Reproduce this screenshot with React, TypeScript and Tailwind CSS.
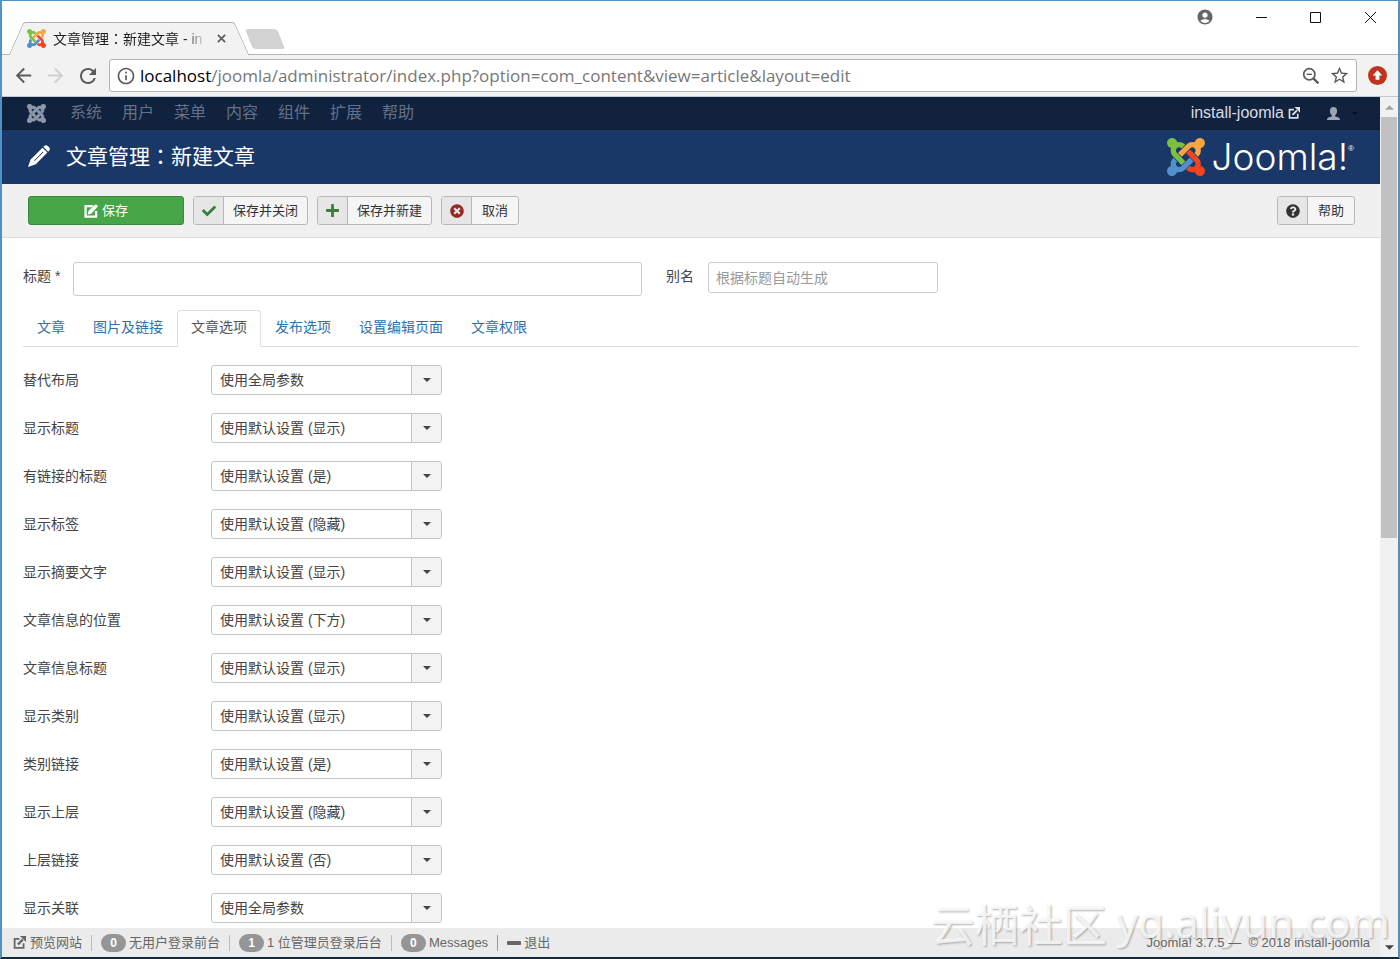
import React, { useState } from "react";
import {
  MdAccountCircle,
  MdArrowBack,
  MdArrowForward,
  MdInfoOutline,
  MdRefresh,
  MdStarBorder,
} from "react-icons/md";
import { FaCheck, FaPlus, FaQuestionCircle, FaTimesCircle } from "react-icons/fa";

const navItems = ["系统", "用户", "菜单", "内容", "组件", "扩展", "帮助"];

const tabs = ["文章", "图片及链接", "文章选项", "发布选项", "设置编辑页面", "文章权限"];

const fields = [
  { id: "layout", label: "替代布局", value: "使用全局参数" },
  { id: "show_title", label: "显示标题", value: "使用默认设置 (显示)" },
  { id: "link_titles", label: "有链接的标题", value: "使用默认设置 (是)" },
  { id: "show_tags", label: "显示标签", value: "使用默认设置 (隐藏)" },
  { id: "show_intro", label: "显示摘要文字", value: "使用默认设置 (显示)" },
  { id: "info_position", label: "文章信息的位置", value: "使用默认设置 (下方)" },
  { id: "info_title", label: "文章信息标题", value: "使用默认设置 (显示)" },
  { id: "show_category", label: "显示类别", value: "使用默认设置 (显示)" },
  { id: "link_category", label: "类别链接", value: "使用默认设置 (是)" },
  { id: "show_parent", label: "显示上层", value: "使用默认设置 (隐藏)" },
  { id: "link_parent", label: "上层链接", value: "使用默认设置 (否)" },
  { id: "show_assoc", label: "显示关联", value: "使用全局参数" },
];

const JoomlaMark = ({ mono = false, className = "" }: { mono?: boolean; className?: string }) => (
  <svg
    viewBox="0 32 448 448"
    className={className}
    stroke={mono ? "currentColor" : "none"}
    strokeWidth="14"
    aria-hidden="true"
  >
    <path
      fill={mono ? "currentColor" : "#7ac143"}
      d="M.6 92.1C.6 58.8 27.4 32 60.4 32c30 0 54.5 21.9 59.2 50.2 32.6-7.6 67.1.6 96.5 30l-44.3 44.3c-20.5-20.5-42.6-16.3-55.4-3.5-14.3 14.3-14.3 37.9 0 52.2l99.5 99.5-44 44.3c-87.7-87.2-49.7-49.7-99.8-99.7-26.8-26.5-35-64.8-24.8-98.9C20.4 144.6.6 120.7.6 92.1z"
    />
    <path
      fill={mono ? "currentColor" : "#f9a541"}
      d="M130.1 208.5l44.3 44.3c10-10 89.7-89.7 99.7-99.8 14.3-14.3 37.6-14.3 51.9 0 12.8 12.8 17 35-3.5 55.4l44 44.3c31.2-31.2 38.5-67.6 28.9-101.2 29.2-4.1 51.9-29.2 51.9-59.5 0-33.2-26.8-60.1-59.8-60.1-30.3 0-55.4 22.5-59.5 51.6-33.8-9.9-71.7-1.5-98.3 25.1-18.3 19.1-71.1 71.5-99.6 99.9z"
    />
    <path
      fill={mono ? "currentColor" : "#f44321"}
      d="M396.4 360.7c8.2-32.7-.9-68.5-26.3-93.9-11.8-12.2 5 4.7-99.5-99.7l-44.3 44.3 99.7 99.7c14.3 14.3 14.3 37.6 0 51.9-12.8 12.8-35 17-55.4-3.5l-44 44.3c27.6 30.2 68 38.8 102.7 28 5.5 27.4 29.7 48.1 58.9 48.1 33 0 59.8-26.8 59.8-60.1 0-30.2-22.5-55-51.6-59.1z"
    />
    <path
      fill={mono ? "currentColor" : "#5091cd"}
      d="M312.1 307.6l-44-44.3c-87 86.4-50.4 50.4-99.7 99.8-14.3 14.3-37.6 14.3-51.9 0-13.1-13.4-16.9-35.3 3.2-55.4l-44-44.3c-30.2 30.2-38 65.2-29.5 98.3-26.7 6-46.2 29.9-46.2 58.2C0 453.2 26.8 480 59.8 480c28.6 0 52.5-19.8 58.6-46.7 32.7 8.2 68.5-.6 94.2-26 32.1-32 12.2-12.4 99.5-99.7z"
    />
  </svg>
);

const ExternalIcon = ({ className = "" }: { className?: string }) => (
  <svg viewBox="0 0 16 16" className={className} fill="none" stroke="currentColor" strokeWidth="2.2" aria-hidden="true">
    <path d="M8 3.5H2v11h11V9" />
    <path d="M6 10.500l6-6" strokeWidth="2.8" />
    <path d="M8.500 0H16v7.500z" fill="currentColor" stroke="none" />
  </svg>
);

const PencilIcon = ({ className = "" }: { className?: string }) => (
  <svg viewBox="0 0 22 22" className={className} aria-hidden="true">
    <path
      fill="currentColor"
      d="M15.400 1.800L16.500.8q1.700-1.300 3.300.2l1.300 1.300q1.400 1.600.2 3.200l-1.100 1.200zM14.500 2.700l4.900 4.800L7.800 19.300 0 22l2.600-7.400z"
    />
    <path d="M6.500 15.700L15 7" stroke="#1a3867" strokeWidth="1" fill="none" />
  </svg>
);

const EditIcon = ({ className = "" }: { className?: string }) => (
  <svg viewBox="0 0 16 16" className={className} aria-hidden="true">
    <path d="M10 2.500H1.800v12h12V8" fill="none" stroke="currentColor" strokeWidth="2.600" />
    <path d="M4.300 12l.8-4L12.300.9q1-.9 2 0l.9.900q.9 1 0 2L8.200 11z" fill="currentColor" />
  </svg>
);

const ZoomOutIcon = ({ className = "" }: { className?: string }) => (
  <svg viewBox="0 0 18 18" className={className} fill="none" stroke="currentColor" strokeWidth="1.700" aria-hidden="true">
    <circle cx="7.300" cy="7.300" r="5.600" />
    <path d="M4.700 7.300h5.200" strokeWidth="1.400" />
    <path d="M11.400 11.400l5 5" strokeWidth="2.200" />
  </svg>
);

const UserIcon = ({ className = "" }: { className?: string }) => (
  <svg viewBox="0 0 16 16" className={className} fill="currentColor" aria-hidden="true">
    <path d="M8 1c2.500 0 3.800 1.700 3.800 4.300 0 1.900-.8 3.600-2 4.500v1.300c2.800.4 5.200 1.300 5.200 3.900H1c0-2.600 2.400-3.500 5.200-3.900V9.800c-1.200-.9-2-2.600-2-4.500C4.200 2.700 5.500 1 8 1z" />
  </svg>
);

const Caret = ({ className = "" }: { className?: string }) => (
  <svg viewBox="0 0 8 4" className={className} fill="currentColor" aria-hidden="true">
    <path d="M0 0h8L4 4z" />
  </svg>
);

// Full-width colon, centred in its cell
const Colon = () => <span className="font-['Noto_Sans_CJK_TC',sans-serif]">：</span>;

interface ToolButtonProps {
  icon: React.ReactNode;
  children: React.ReactNode;
}

const ToolButton: React.FC<ToolButtonProps> = ({ icon, children }) => (
  <button className="flex h-[29px] min-w-[78px] overflow-hidden rounded-[3px] border border-[#b8b8b8] bg-[#f5f5f5] text-[13px] leading-[27px] text-[#333]">
    <span className="flex h-full w-[30px] flex-none items-center justify-center border-r border-[#b8b8b8] bg-[#e6e6e6]">
      {icon}
    </span>
    <span className="flex-1 px-[9px]">{children}</span>
  </button>
);

const BrowserChrome = () => (
  <header className="flex-none bg-white">
    <div className="flex h-[54px] items-end justify-between border-b border-[#b5b5b5]">
      <div className="flex items-end pl-[7px]">
        <div className="relative -mb-px flex h-[33px] w-[240px] items-center pl-[18px] pr-[22px]">
          <span className="absolute inset-y-0 left-[7px] w-1/2 -skew-x-[24deg] rounded-tl-[3px] border-l border-t border-[#b0b0b0] bg-[#f2f2f2]" />
          <span className="absolute inset-y-0 right-[7px] w-1/2 skew-x-[24deg] rounded-tr-[3px] border-r border-t border-[#b0b0b0] bg-[#f2f2f2]" />
          <JoomlaMark className="relative size-[19px] flex-none" />
          <span className="relative ml-[7px] w-[154px] overflow-hidden whitespace-nowrap text-sm text-[#222] [mask-image:linear-gradient(to_right,black_85%,transparent)]">
            文章管理<Colon />新建文章 - in
          </span>
          <button aria-label="关闭标签页" className="relative ml-[10px] flex-none text-[#5a5a5a]">
            <svg viewBox="0 0 10 10" className="size-[9px]" stroke="currentColor" strokeWidth="1.800">
              <path d="M1 1l8 8M9 1l-8 8" />
            </svg>
          </button>
        </div>
        <button
          aria-label="新标签页"
          className="mb-[5px] h-[20px] w-[32px] skew-x-[22deg] rounded-[3px] bg-[#d2d2d2]"
        />
      </div>
      <div className="flex self-start pr-[21px] pt-[7px] text-[#111]">
        <button aria-label="用户" className="mr-[41px] text-[#666]">
          <MdAccountCircle className="size-[18px]" />
        </button>
        <button aria-label="最小化" className="mr-[41px]">
          <svg viewBox="0 0 13 13" className="size-[13px]" stroke="currentColor">
            <path d="M1 6.5h11" />
          </svg>
        </button>
        <button aria-label="最大化" className="mr-[42px]">
          <svg viewBox="0 0 13 13" className="size-[13px]" stroke="currentColor" fill="none">
            <path d="M1.500 1.500h10v10h-10z" />
          </svg>
        </button>
        <button aria-label="关闭">
          <svg viewBox="0 0 13 13" className="size-[13px]" stroke="currentColor">
            <path d="M1 1l11 11M12 1L1 12" />
          </svg>
        </button>
      </div>
    </div>
    <div className="flex h-[42px] items-center border-b border-[#c4c7cf] bg-[#f2f2f2] pl-[10px] pr-[11px] text-[#5a5a5a]">
      <button aria-label="后退">
        <MdArrowBack className="size-[23px]" />
      </button>
      <button aria-label="前进" className="ml-[9px] text-[#d0d0d0]">
        <MdArrowForward className="size-[23px]" />
      </button>
      <button aria-label="刷新" className="ml-[9px] mr-[9px]">
        <MdRefresh className="size-[24px]" />
      </button>
      <div className="flex h-[33px] flex-1 items-center rounded-[3px] border border-[#b3b3b3] bg-white px-[6px]">
        <MdInfoOutline className="size-[20px] flex-none" />
        <span className="ml-1 flex-1 whitespace-nowrap font-['Open_Sans',sans-serif] text-[17px] leading-[24px] text-[#777]">
          <span className="text-black">localhost</span>
          /joomla/administrator/index.php?option=com_content&amp;view=article&amp;layout=edit
        </span>
        <ZoomOutIcon className="size-[18px] flex-none" />
        <MdStarBorder className="ml-[9px] size-[21px] flex-none" />
      </div>
      <button aria-label="更新" className="ml-[11px]">
        <svg viewBox="0 0 20 20" className="size-[19px]">
          <circle cx="10" cy="10" r="10" fill="#c0341f" />
          <path d="M10 4.500l5 5.500h-3v4.500H8V10H5z" fill="#fff" />
        </svg>
      </button>
    </div>
  </header>
);

const Badge = ({ children }: { children: React.ReactNode }) => (
  <span className="flex h-[18px] w-[25px] items-center justify-center rounded-full bg-[#959595] text-xs font-bold text-white">
    {children}
  </span>
);

const StatusBar = () => (
  <footer className="flex h-[29px] flex-none items-center justify-between bg-[#ebebeb] pl-[11px] pr-[10px] text-[13px] text-[#666]">
    <div className="flex items-center">
      <a href="#preview" className="flex items-center gap-1">
        <ExternalIcon className="size-[13px]" />
        预览网站
      </a>
      <span className="ml-[9px] h-4 border-l border-[#bbb]" />
      <a href="#visitors" className="ml-[9px] flex items-center gap-[3px]">
        <Badge>0</Badge>无用户登录前台
      </a>
      <span className="ml-[9px] h-4 border-l border-[#bbb]" />
      <a href="#admins" className="ml-[9px] flex items-center gap-[3px]">
        <Badge>1</Badge>1 位管理员登录后台
      </a>
      <span className="ml-[9px] h-4 border-l border-[#bbb]" />
      <a href="#messages" className="ml-[9px] flex items-center gap-[3px]">
        <Badge>0</Badge>Messages
      </a>
      <span className="ml-[9px] h-4 border-l border-[#999]" />
      <a href="#logout" className="ml-[9px] flex items-center gap-[3px]">
        <span className="h-[4px] w-[14px] rounded-[1px] bg-[#666]" />
        退出
      </a>
    </div>
    <span className="relative z-10">Joomla! 3.7.5 — &nbsp;© 2018 install-joomla</span>
  </footer>
);

const App: React.FC = () => {
  const [activeTab, setActiveTab] = useState("文章选项");

  return (
    <div className="relative flex h-screen flex-col overflow-hidden border-x-2 border-b-2 border-t border-[#4f93c4] border-b-[#14293a] bg-white font-['Liberation_Sans','Noto_Sans_CJK_SC',sans-serif]">
      <BrowserChrome />

      <div className="flex min-h-0 flex-1">
        <div className="flex min-w-0 flex-1 flex-col">
          <div className="min-h-0 flex-1 overflow-hidden">
            <nav className="flex h-[33px] items-center border-b border-[#0d1a30] bg-[#10223e] pl-[25px] pr-[22px] text-base text-[#63718a]">
              <a href="#home" aria-label="Joomla">
                <JoomlaMark mono className="size-[19px] text-[#8d98ab]" />
              </a>
              <ul className="ml-[24px] flex gap-5">
                {navItems.map((item) => (
                  <li key={item}>
                    <a href={`#${item}`}>{item}</a>
                  </li>
                ))}
              </ul>
              <a href="#site" className="ml-auto flex items-center gap-1 text-[#d9dde4]">
                install-joomla <ExternalIcon className="size-[12px]" />
              </a>
              <button aria-label="用户菜单" className="ml-[26px] flex items-center gap-[11px] text-[#9aa5b8]">
                <UserIcon className="size-[15px]" />
                <Caret className="h-[3px] w-[6px] text-[#070f1e]" />
              </button>
            </nav>

            <div className="flex h-[54px] items-center justify-between bg-[#1a3867] px-[26px] text-white">
              <h1 className="flex items-center pb-[2px] text-[21px] leading-[30px]">
                <PencilIcon className="mr-4 size-[22px]" />
                <span>
                  文章管理<Colon />新建文章
                </span>
              </h1>
              <a href="#joomla" className="flex items-center">
                <JoomlaMark className="size-[38px]" />
                <span className="ml-[7px] font-['Inter',sans-serif] text-[37px] font-light leading-[40px]">
                  Joomla!
                </span>
                <sup className="-top-2 text-[8px]">®</sup>
              </a>
            </div>

            <div className="flex h-[54px] items-center gap-[9px] border-b border-[#dcdcdc] bg-[#f0f0f0] pl-[26px] pr-[25px]">
              <button className="flex h-[29px] w-[156px] items-center justify-center gap-1 rounded-[3px] border border-[#3a8a3a] bg-[#46a546] text-[13px] text-white">
                <EditIcon className="size-[14px]" />
                保存
              </button>
              <ToolButton icon={<FaCheck className="size-[14px] text-[#378137]" />}>保存并关闭</ToolButton>
              <ToolButton icon={<FaPlus className="size-[15px] text-[#378137]" />}>保存并新建</ToolButton>
              <ToolButton icon={<FaTimesCircle className="size-[14px] text-[#942a25]" />}>取消</ToolButton>
              <div className="ml-auto">
                <ToolButton icon={<FaQuestionCircle className="size-[14px] text-[#333]" />}>帮助</ToolButton>
              </div>
            </div>

            <form className="px-[21px] pt-6 text-sm text-[#444]">
              <div className="flex items-start">
                <label htmlFor="title" className="w-[50px] flex-none leading-[28px]">
                  标题 *
                </label>
                <input
                  id="title"
                  className="h-[34px] w-full max-w-[569px] rounded-[3px] border border-[#ccc] bg-white px-2"
                />
                <label htmlFor="alias" className="ml-6 w-[42px] flex-none leading-[28px]">
                  别名
                </label>
                <input
                  id="alias"
                  placeholder="根据标题自动生成"
                  className="h-[31px] w-[230px] rounded-[3px] border border-[#ccc] bg-white px-[7px] placeholder:text-[#999]"
                />
              </div>

              <div role="tablist" className="mt-[14px] flex border-b border-[#ddd]">
                {tabs.map((tab) => (
                  <button
                    key={tab}
                    type="button"
                    role="tab"
                    aria-selected={activeTab === tab}
                    onClick={() => setActiveTab(tab)}
                    className={`-mb-px h-[37px] rounded-t-[4px] border px-[13px] pb-[3px] ${
                      activeTab === tab
                        ? "border-[#ddd] border-b-white bg-white text-[#555]"
                        : "border-transparent text-[#3071a9]"
                    }`}
                  >
                    {tab}
                  </button>
                ))}
              </div>

              <div className="mt-[18px] flex flex-col gap-[18px]">
                {fields.map((field) => (
                  <div key={field.id} className="flex items-center">
                    <label htmlFor={field.id} className="w-[188px] flex-none">
                      {field.label}
                    </label>
                    <div className="relative w-[231px]">
                      <select
                        id={field.id}
                        className="block h-[30px] w-full appearance-none rounded-[3px] border border-[#c4c4c4] bg-white pl-[8px] pr-[32px] text-[#444]"
                      >
                        <option>{field.value}</option>
                      </select>
                      <span className="pointer-events-none absolute inset-y-px right-px flex w-[30px] items-center justify-center rounded-r-[2px] border-l border-[#c4c4c4] bg-[#f3f3f3] text-[#444]">
                        <Caret className="h-[4px] w-[8px]" />
                      </span>
                    </div>
                  </div>
                ))}
              </div>
            </form>
          </div>
          <StatusBar />
        </div>

        <div className="flex w-[18px] flex-none flex-col items-center bg-[#f1f1f1]">
          <span className="flex h-[20px] items-center">
            <Caret className="h-[5px] w-[9px] rotate-180 text-[#a3a3a3]" />
          </span>
          <span className="h-[49%] w-[16px] bg-[#c1c1c1]" />
          <span className="mt-auto flex h-[20px] items-center">
            <Caret className="h-[5px] w-[9px] text-[#444]" />
          </span>
        </div>
      </div>

      <div className="pointer-events-none absolute bottom-0 right-[8px] flex items-start gap-[10px] whitespace-nowrap text-[44px] leading-[60px] text-white/80 [text-shadow:1px_1px_2px_rgb(0_0_0/0.3)]">
        <span>云栖社区</span>
        <span className="font-['Noto_Sans',sans-serif] text-[42px] leading-[50px]">yq.aliyun.com</span>
      </div>
    </div>
  );
};

export default App;
